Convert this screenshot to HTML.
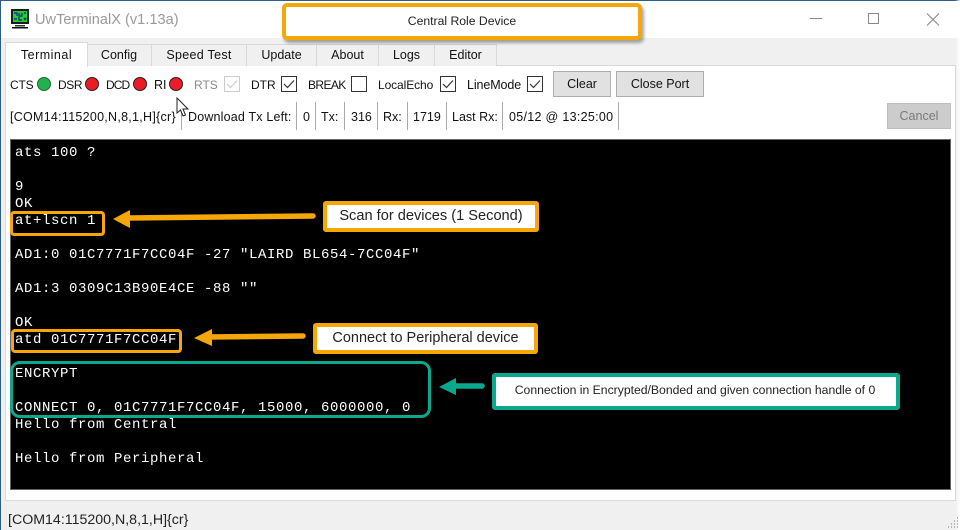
<!DOCTYPE html>
<html><head><meta charset="utf-8">
<style>
html,body{margin:0;padding:0;width:960px;height:530px;overflow:hidden;background:#f0f0f0}
body{position:relative;font-family:"Liberation Sans",sans-serif;color:#111}
.a{position:absolute;box-sizing:border-box}
.t{position:absolute;white-space:pre;font-size:12.5px;line-height:16px;height:16px}
.tab{position:absolute;box-sizing:border-box;top:44px;height:22px;background:#f0f0f0;border:1px solid #d9d9d9;border-bottom:none;border-left:none;text-align:center;font-size:12.5px;line-height:21px}
.led{position:absolute;width:14px;height:14px;border-radius:50%;top:77px;box-sizing:border-box;border:1px solid #222}
.cb{position:absolute;top:76px;width:16px;height:16px;box-sizing:border-box;border:1px solid #333;background:#fff}
.cb svg{position:absolute;left:0;top:0}
.sep{position:absolute;top:102px;height:28px;width:1px;background:#a9a9a9}
.btn{position:absolute;box-sizing:border-box;background:#e1e1e1;border:1px solid #adadad;text-align:center;font-size:12.5px;line-height:24px}
.term{position:absolute;left:15px;white-space:pre;font-family:"Liberation Mono",monospace;font-size:14px;letter-spacing:.6px;line-height:17px;height:17px;color:#fff}
.call{position:absolute;box-sizing:border-box;background:#fff;text-align:center;color:#222;border-radius:3px}
</style></head><body>
<div class="a" style="left:0;top:0;width:960px;height:38px;background:#fff"></div>
<div class="a" style="left:0;top:0;width:960px;height:1px;background:#2f5d85"></div>
<div class="a" style="left:0;top:0;width:1px;height:530px;background:#2f5d85"></div>
<div class="a" style="left:955px;top:0;width:5px;height:530px;background:linear-gradient(90deg,rgba(255,255,255,0),rgba(255,255,255,.9))"></div>

<svg class="a" style="left:10px;top:8px" width="20" height="21" viewBox="0 0 20 21">
<rect x="1" y="1" width="18" height="15" fill="#1a1a2a"/>
<rect x="3" y="3" width="14" height="11" fill="#1fd31f"/>
<path d="M4 5h3v3M9 5v3h3V5M14 5h2M4 11h3M9 9v3h3M14 10l2 2m0-2l-2 2" stroke="#1a1ab0" stroke-width="1.2" fill="none"/>
<rect x="5" y="17" width="10" height="1.500" fill="#333"/>
<rect x="2" y="19" width="16" height="1.500" fill="#111"/>
</svg>
<div class="t" style="left:35px;top:11px;font-size:14.600px;line-height:18px;height:18px;color:#9a9a9a">UwTerminalX (v1.13a)</div>

<svg class="a" style="left:800px;top:10px" width="150" height="20" viewBox="0 0 150 20">
<path d="M10 8.500h12" stroke="#888" stroke-width="1"/>
<rect x="68.500" y="3.500" width="10" height="10" fill="none" stroke="#888"/>
<path d="M127 3.500l12 12M139 3.500l-12 12" stroke="#888" stroke-width="1"/>
</svg>

<!-- tab pane -->
<div class="a" style="left:5px;top:65px;width:951px;height:436px;background:#fff;border:1px solid #d9d9d9"></div>
<div class="tab" style="left:87px;width:65px">Config</div>
<div class="tab" style="left:152px;width:95px;letter-spacing:.3px">Speed Test</div>
<div class="tab" style="left:247px;width:70px">Update</div>
<div class="tab" style="left:317px;width:62px">About</div>
<div class="tab" style="left:379px;width:56px">Logs</div>
<div class="tab" style="left:435px;width:62px">Editor</div>
<div class="tab" style="left:5px;top:42px;width:83px;height:25px;background:#fff;border-left:1px solid #d9d9d9;line-height:25px;letter-spacing:.5px">Terminal</div>

<!-- row 1 -->
<div class="t" style="left:10px;top:77px;font-size:12px;letter-spacing:-.2px">CTS</div>
<div class="led" style="left:37px;background:#22b14c;border-color:#1a6a33"></div>
<div class="t" style="left:58px;top:77px;font-size:12px;letter-spacing:-.4px">DSR</div>
<div class="led" style="left:85px;background:#ed1c24"></div>
<div class="t" style="left:106px;top:77px;font-size:12px;letter-spacing:-.9px">DCD</div>
<div class="led" style="left:133px;background:#ed1c24"></div>
<div class="t" style="left:154px;top:77px">RI</div>
<div class="led" style="left:169px;background:#ed1c24"></div>
<div class="t" style="left:194px;top:77px;font-size:12px;color:#8a8a8a">RTS</div>
<div class="cb" style="left:224px;border-color:#ccc"><svg width="14" height="14"><path d="M2 7l3.500 3.500L12 3.500" stroke="#ccc" fill="none" stroke-width="1.2"/></svg></div>
<div class="t" style="left:251px;top:77px;font-size:12px">DTR</div>
<div class="cb" style="left:281px"><svg width="14" height="14"><path d="M2 7l3.500 3.500L12 3.500" stroke="#333" fill="none" stroke-width="1.2"/></svg></div>
<div class="t" style="left:308px;top:77px;font-size:12px;letter-spacing:-.6px">BREAK</div>
<div class="cb" style="left:351px"></div>
<div class="t" style="left:378px;top:77px;font-size:12px;letter-spacing:-.1px">LocalEcho</div>
<div class="cb" style="left:440px"><svg width="14" height="14"><path d="M2 7l3.500 3.500L12 3.500" stroke="#333" fill="none" stroke-width="1.2"/></svg></div>
<div class="t" style="left:467px;top:77px;letter-spacing:-.1px">LineMode</div>
<div class="cb" style="left:527px"><svg width="14" height="14"><path d="M2 7l3.500 3.500L12 3.500" stroke="#333" fill="none" stroke-width="1.2"/></svg></div>
<div class="btn" style="left:553px;top:71px;width:58px;height:26px">Clear</div>
<div class="btn" style="left:616px;top:71px;width:88px;height:26px">Close Port</div>

<!-- row 2 -->
<div class="t" style="left:10px;top:109px;letter-spacing:.27px">[COM14:115200,N,8,1,H]{cr}</div>
<div class="sep" style="left:181px"></div>
<div class="t" style="left:188px;top:109px;letter-spacing:.18px">Download Tx Left:</div>
<div class="sep" style="left:296px"></div>
<div class="t" style="left:303px;top:109px">0</div>
<div class="sep" style="left:315px"></div>
<div class="t" style="left:321px;top:109px">Tx:</div>
<div class="sep" style="left:344px"></div>
<div class="t" style="left:351px;top:109px">316</div>
<div class="sep" style="left:377px"></div>
<div class="t" style="left:383px;top:109px">Rx:</div>
<div class="sep" style="left:407px"></div>
<div class="t" style="left:413px;top:109px">1719</div>
<div class="sep" style="left:446px"></div>
<div class="t" style="left:452px;top:109px">Last Rx:</div>
<div class="sep" style="left:502px"></div>
<div class="t" style="left:509px;top:109px;letter-spacing:.3px">05/12 @ 13:25:00</div>
<div class="sep" style="left:618px"></div>
<div class="btn" style="left:887px;top:103px;width:64px;height:26px;background:#ccc;border-color:#bfbfbf;color:#7a7a7a">Cancel</div>

<!-- cursor -->
<svg class="a" style="left:176px;top:97px" width="14" height="22" viewBox="0 0 14 22"><path d="M1 1v15l3.500-3 2.500 6 2.500-1-2.500-6h5z" fill="#fff" stroke="#222" stroke-width="1"/></svg>

<!-- terminal -->
<div class="a" style="left:10px;top:139px;width:941px;height:351px;background:#000;border:1px solid #666"></div>
<div class="term" style="top:145px">ats 100 ?</div>
<div class="term" style="top:179px">9</div>
<div class="term" style="top:196px">OK</div>
<div class="term" style="top:213px">at+lscn 1</div>
<div class="term" style="top:247px">AD1:0 01C7771F7CC04F -27 "LAIRD BL654-7CC04F"</div>
<div class="term" style="top:281px">AD1:3 0309C13B90E4CE -88 ""</div>
<div class="term" style="top:315px">OK</div>
<div class="term" style="top:332px">atd 01C7771F7CC04F</div>
<div class="term" style="top:366px">ENCRYPT</div>
<div class="term" style="top:400px">CONNECT 0, 01C7771F7CC04F, 15000, 6000000, 0</div>
<div class="term" style="top:417px">Hello from Central</div>
<div class="term" style="top:451px">Hello from Peripheral</div>

<!-- annotation boxes -->
<div class="a" style="left:10px;top:211px;width:95px;height:25px;border:3px solid #f5a70a;border-radius:4px"></div>
<div class="a" style="left:11px;top:329px;width:171px;height:24px;border:3px solid #f5a70a;border-radius:4px"></div>
<div class="a" style="left:10px;top:361px;width:421px;height:57px;border:3px solid #0aa98d;border-radius:10px"></div>

<!-- arrows -->
<svg class="a" style="left:0;top:0" width="960" height="530">
<path d="M126 218L313 216" stroke="#f5a70a" stroke-width="5.500" stroke-linecap="round"/>
<path d="M113 219l17-9v18z" fill="#f5a70a"/>
<path d="M208 337L303 336" stroke="#f5a70a" stroke-width="5.500" stroke-linecap="round"/>
<path d="M194 338l18-9v17z" fill="#f5a70a"/>
<path d="M452 386L482 386" stroke="#0aa98d" stroke-width="5.500" stroke-linecap="round"/>
<path d="M439 387l17-9v17z" fill="#0aa98d"/>
<!-- resize grip -->
<path d="M957 518h1M954 521h1M957 521h1M951 524h1M954 524h1M957 524h1M948 527h1M951 527h1M954 527h1M957 527h1" stroke="#b5b5b5" stroke-width="2"/>
</svg>

<div class="call" style="left:323px;top:201px;width:216px;height:31px;border:4px solid #f5a70a;font-size:14.600px;line-height:23px">Scan for devices (1 Second)</div>
<div class="call" style="left:313px;top:323px;width:225px;height:31px;border:4px solid #f5a70a;font-size:14.500px;line-height:23px">Connect to Peripheral device</div>
<div class="call" style="left:492px;top:373px;width:408px;height:37px;border:4px solid #0aa98d;font-size:12.200px;line-height:27px;text-indent:-2px">Connection in Encrypted/Bonded and given connection handle of 0</div>
<div class="call" style="left:282px;top:3px;width:360px;height:37px;border:4px solid #f5a70a;font-size:12.200px;line-height:28px;border-radius:5px;box-shadow:2px 3px 3px rgba(0,0,0,.35)">Central Role Device</div>

<!-- status -->
<div class="t" style="left:8px;top:512px;font-size:14.200px;line-height:17px;height:17px;color:#222">[COM14:115200,N,8,1,H]{cr}</div>
</body></html>
